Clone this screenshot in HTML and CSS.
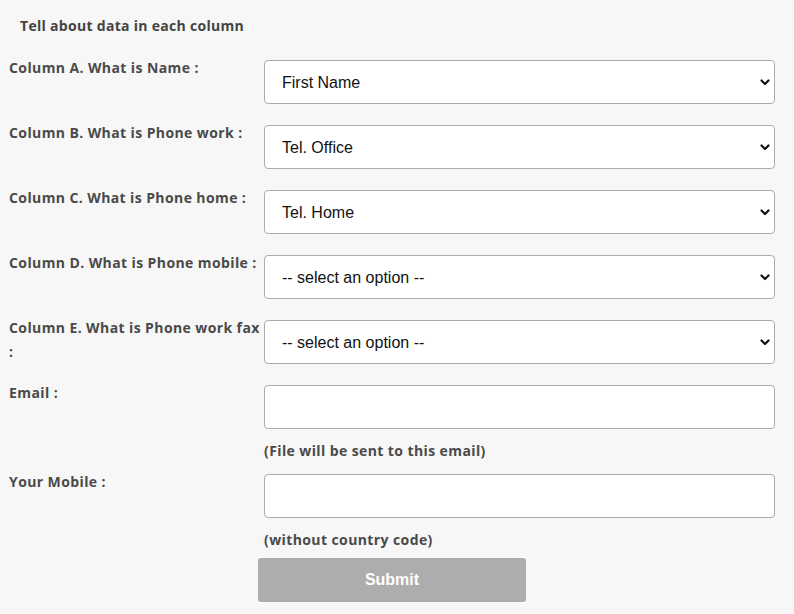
FILE: index.html
```html
<!DOCTYPE html>
<html>
<head>
<meta charset="utf-8">
<link rel="stylesheet" href="styles.css">
</head>
<body>
<div class="page">
  <h3 class="title">Tell about data in each column</h3>
  <form class="form">
    <div class="row">
      <label class="label">Column A. What is Name :</label>
      <div class="field">
        <div class="select-wrap">
          <select class="select"><option>First Name</option></select>
          <svg class="chev" width="10" height="7" viewBox="0 0 10 7"><path d="M1.5 1.5 L5 5 L8.5 1.5" fill="none" stroke="#111" stroke-width="2.2" stroke-linecap="round" stroke-linejoin="round"/></svg>
        </div>
      </div>
    </div>
    <div class="row">
      <label class="label">Column B. What is Phone work :</label>
      <div class="field">
        <div class="select-wrap">
          <select class="select"><option>Tel. Office</option></select>
          <svg class="chev" width="10" height="7" viewBox="0 0 10 7"><path d="M1.5 1.5 L5 5 L8.5 1.5" fill="none" stroke="#111" stroke-width="2.2" stroke-linecap="round" stroke-linejoin="round"/></svg>
        </div>
      </div>
    </div>
    <div class="row">
      <label class="label">Column C. What is Phone home :</label>
      <div class="field">
        <div class="select-wrap">
          <select class="select"><option>Tel. Home</option></select>
          <svg class="chev" width="10" height="7" viewBox="0 0 10 7"><path d="M1.5 1.5 L5 5 L8.5 1.5" fill="none" stroke="#111" stroke-width="2.2" stroke-linecap="round" stroke-linejoin="round"/></svg>
        </div>
      </div>
    </div>
    <div class="row">
      <label class="label">Column D. What is Phone mobile :</label>
      <div class="field">
        <div class="select-wrap">
          <select class="select"><option>-- select an option --</option></select>
          <svg class="chev" width="10" height="7" viewBox="0 0 10 7"><path d="M1.5 1.5 L5 5 L8.5 1.5" fill="none" stroke="#111" stroke-width="2.2" stroke-linecap="round" stroke-linejoin="round"/></svg>
        </div>
      </div>
    </div>
    <div class="row">
      <label class="label">Column E. What is Phone work fax :</label>
      <div class="field">
        <div class="select-wrap">
          <select class="select"><option>-- select an option --</option></select>
          <svg class="chev" width="10" height="7" viewBox="0 0 10 7"><path d="M1.5 1.5 L5 5 L8.5 1.5" fill="none" stroke="#111" stroke-width="2.2" stroke-linecap="round" stroke-linejoin="round"/></svg>
        </div>
      </div>
    </div>
    <div class="row">
      <label class="label">Email :</label>
      <div class="field">
        <input class="input" type="text">
        <div class="note">(File will be sent to this email)</div>
      </div>
    </div>
    <div class="row row-after-note">
      <label class="label">Your Mobile :</label>
      <div class="field">
        <input class="input" type="text">
        <div class="note">(without country code)</div>
      </div>
    </div>
    <div class="actions">
      <button class="submit" type="button">Submit</button>
    </div>
  </form>
</div>
</body>
</html>
```

FILE: styles.css
```css
* { box-sizing: border-box; }
html, body { margin: 0; padding: 0; }
body {
  background: #f7f7f7;
  font-family: "Open Sans", "DejaVu Sans", sans-serif;
  color: #4a4a4a;
}
.page {
  padding: 16px 0 0 9px;
}
.title {
  margin: 0 0 19px 11px;
  font-size: 14px;
  line-height: 20px;
  font-weight: 700;
  letter-spacing: 0.3px;
  color: #444;
}
.form {
  display: flex;
  flex-direction: column;
}
.row {
  display: grid;
  grid-template-columns: 255px 511px;
}
.row + .row { margin-top: 16px; }
.row.row-after-note { margin-top: 8px; }
.label {
  padding-top: 1px;
  font-size: 14px;
  font-weight: 700;
  line-height: 24px;
  letter-spacing: 0.4px;
  color: #4a4a4a;
}
.field {
  padding-top: 5px;
}
.select-wrap {
  position: relative;
}
.select, .input {
  display: block;
  width: 511px;
  height: 44px;
  margin: 0;
  background: #fff;
  border: 1px solid #acacac;
  border-radius: 4px;
  font-family: "Liberation Sans", Arial, sans-serif;
  font-size: 16px;
  color: #111;
  outline: none;
}
.select {
  appearance: none;
  -webkit-appearance: none;
  padding: 0 30px 0 17px;
}
.input { padding: 0 17px; }
.chev {
  position: absolute;
  right: 5px;
  top: 19px;
}
.note {
  margin-top: 12px;
  font-size: 14px;
  font-weight: 700;
  line-height: 20px;
  letter-spacing: 0.4px;
  color: #4a4a4a;
}
.actions {
  padding-left: 249px;
  margin-top: 8px;
}
.submit {
  display: block;
  width: 268px;
  height: 44px;
  border: 0;
  border-radius: 3px;
  background: #adadad;
  color: #fff;
  font-family: "Liberation Sans", Arial, sans-serif;
  font-size: 16px;
  font-weight: 700;
}
```
